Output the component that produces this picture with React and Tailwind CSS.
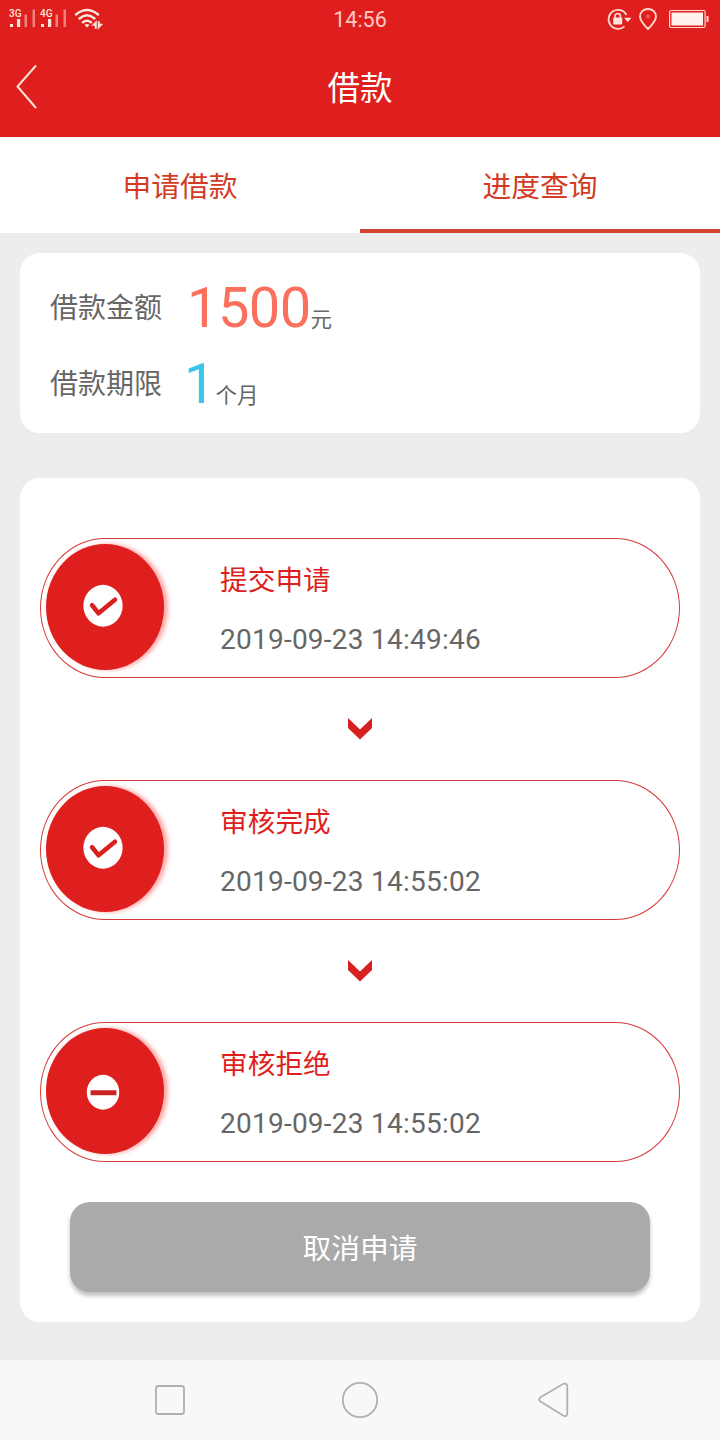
import React from "react";

const steps = [
  { title: "提交申请", time: "2019-09-23 14:49:46", icon: "check" },
  { title: "审核完成", time: "2019-09-23 14:55:02", icon: "check" },
  { title: "审核拒绝", time: "2019-09-23 14:55:02", icon: "minus" },
];

function Signal({ label }) {
  return (
    <svg className="h-6 w-[31px]" viewBox="0 0 31 24" fill="#ffe6dc">
      <text x="1" y="9.5" fontSize="10" fontWeight="500" fontFamily="Roboto, sans-serif">{label}</text>
      <rect x="2" y="17" width="3" height="3" />
      <rect x="9" y="12" width="3.200" height="8" />
      <rect x="16.500" y="7.500" width="2.500" height="12.500" opacity="0.5" />
      <rect x="24.500" y="2.500" width="2.500" height="17.500" opacity="0.5" />
    </svg>
  );
}

function StatusBar() {
  return (
    <div className="grid h-10 grid-cols-3 items-center">
      <div className="flex items-center pb-[2px] pl-2">
        <Signal label="3G" />
        <Signal label="4G" />
        <svg className="ml-1 h-6 w-[30px]" viewBox="0 0 30 24" fill="none" stroke="#ffe6dc" strokeWidth="2.400" strokeLinecap="round">
          <path d="M2 7.500Q13-1.500 24 7.500M5.500 11.500Q13 5 20.500 11.500M9 15.300Q13 12 17 15.300" />
          <path d="M10.500 18Q13 16 15.500 18L13 20.500Z" fill="#ffe6dc" stroke="none" />
          <path d="M22.500 14V21.500H21V18.500H18ZM24 22V14.500H25.500V17H28.500Z" fill="#ffe6dc" stroke="#ffe6dc" strokeWidth="0.500" />
        </svg>
      </div>
      <div className="text-center text-[21.500px] leading-[40px] text-[#ffc8c0]">14:56</div>
      <div className="flex items-center justify-end pb-[3px] pr-[11px]">
        <svg className="h-6 w-[26px]" viewBox="0 0 26 24" fill="none" stroke="#ffd9cf" strokeWidth="1.700">
          <path d="M20.500 8A9.500 9.500 0 1 0 18.500 19.300" />
          <path d="M18 10.700H25.500L21.800 15Z" fill="#ffe6dc" stroke="none" />
          <rect x="7.200" y="10.500" width="9" height="7" rx="1" fill="#ffe6dc" stroke="none" />
          <path d="M9 11V9Q9 6.700 11.700 6.700T14.400 9V11" />
        </svg>
        <svg className="ml-[6px] h-6 w-5" viewBox="0 0 20 24" fill="none" stroke="#ffd9cf" strokeWidth="1.900">
          <path d="M10 2C5.300 2 2 5.300 2 9.500C2 14 6 18 10 22C14 18 18 14 18 9.500C18 5.300 14.700 2 10 2Z" />
          <circle cx="10" cy="9.500" r="2" fill="#f56055" stroke="none" />
        </svg>
        <svg className="ml-[10px] h-6 w-[41px]" viewBox="0 0 41 24" fill="none">
          <rect x="1.600" y="3.500" width="35.500" height="17" rx="1.500" stroke="#ffd9cf" strokeWidth="1.200" />
          <rect x="3.500" y="5.500" width="31.500" height="13" fill="#fff1ee" />
          <rect x="38.500" y="9" width="2" height="6" rx="0.500" fill="#ffd9cf" />
        </svg>
      </div>
    </div>
  );
}

function Step({ title, time, icon }) {
  return (
    <div className="flex h-[140px] rounded-[65px/70px] border border-[#d93a3c] pl-[4.500px] pt-[5px]">
      <div className="h-[125.500px] w-[118px] rounded-[50%] bg-[#de1f1e] shadow-[4px_0_4px_rgba(255,60,60,0.45)]">
        {icon === "check" ? (
          <svg className="h-full w-full" viewBox="0 0 118 126">
            <ellipse cx="57" cy="62" rx="19.700" ry="21" fill="#fff" />
            <path d="M46 61.500L52.500 69.500L69 56" fill="none" stroke="#d8201f" strokeWidth="4.600" strokeLinecap="round" strokeLinejoin="round" />
          </svg>
        ) : (
          <svg className="h-full w-full" viewBox="0 0 118 126">
            <ellipse cx="57" cy="64.500" rx="16.300" ry="17.500" fill="#fff" />
            <rect x="44.500" y="62.500" width="26" height="5" fill="#cc2424" />
          </svg>
        )}
      </div>
      <div className="ml-[56.500px] pt-[17px]">
        <div className="h-10 text-[27.700px] leading-[40px] text-[#de1f1e]">{title}</div>
        <div className="mt-[19px] h-10 text-[28px] leading-[40px] tracking-[0.240px] text-[#666]">{time}</div>
      </div>
    </div>
  );
}

export default function App() {
  return (
    <div className="flex h-[1440px] w-[720px] flex-col bg-[#ededed] font-['Roboto','Noto_Sans_CJK_SC',sans-serif]">
      <header className="h-[137px] bg-[#de1f1e]">
        <StatusBar />
        <div className="grid h-[93px] grid-cols-3 items-center">
          <svg className="ml-[14px] h-12 w-6" viewBox="0 0 24 48" fill="none" stroke="#ffe4da" strokeWidth="2">
            <path d="M22 2.500L3.500 23.500L22 45" />
          </svg>
          <h1 className="pt-1 text-center text-[32.500px] leading-[48px] text-white">借款</h1>
        </div>
      </header>

      <nav className="grid h-24 grid-cols-2 bg-white text-center text-[28.800px] leading-[100px] text-[#d23c24]">
        <div className="h-24">申请借款</div>
        <div className="h-24 border-b-4 border-[#cf4430]">进度查询</div>
      </nav>

      <main className="flex flex-1 flex-col px-5 pt-5">
        <section className="flex h-[180px] flex-col rounded-[20px] bg-white pl-[30px] pt-[17px] text-[#666]">
          <div className="flex h-[76px] items-center">
            <span className="pt-[2px] text-[28px] leading-[76px]">借款金额</span>
            <span className="ml-[25px] flex items-baseline">
              <span className="text-[56px] leading-[76px] tracking-[-0.600px] text-[#fb705c]">1500</span>
              <span className="text-[21.500px] leading-[30px]">元</span>
            </span>
          </div>
          <div className="flex h-[76px] items-center">
            <span className="pt-[2px] text-[28px] leading-[76px]">借款期限</span>
            <span className="ml-[22px] flex items-baseline">
              <span className="text-[56px] leading-[76px] text-[#3cc5ec]">1</span>
              <span className="text-[21.500px] leading-[30px]">个月</span>
            </span>
          </div>
        </section>

        <section className="mt-[45px] h-[844px] rounded-[20px] bg-white px-5 pt-[60px]">
          {steps.map((step, i) => (
            <React.Fragment key={step.title}>
              {i > 0 && (
                <div className="flex h-[102px] items-center justify-center">
                  <svg className="h-[22px] w-6" viewBox="0 0 24 22">
                    <path d="M0 0L12 11.500L24 0V10L12 21.500L0 10Z" fill="#d92020" />
                  </svg>
                </div>
              )}
              <Step {...step} />
            </React.Fragment>
          ))}
          <button className="mx-[30px] mt-10 block h-[90px] w-[580px] rounded-[20px] bg-[#aaa] pt-[5px] text-[28.800px] text-white shadow-[0_4px_4px_rgba(0,0,0,0.25)]">
            取消申请
          </button>
        </section>
      </main>

      <footer className="flex h-20 items-center bg-[#f8f8f8]">
        <svg className="ml-[154px] h-8 w-8" viewBox="0 0 32 32" fill="none" stroke="#b0b0b0" strokeWidth="1.800">
          <rect x="2" y="2" width="28" height="28" rx="2.500" />
        </svg>
        <svg className="ml-[155px] h-[38px] w-[38px]" viewBox="0 0 38 38" fill="none" stroke="#b0b0b0" strokeWidth="1.800">
          <circle cx="19" cy="19" r="17.200" />
        </svg>
        <svg className="ml-[158px] h-9 w-8" viewBox="0 0 32 36" fill="none" stroke="#b0b0b0" strokeWidth="1.800" strokeLinejoin="round">
          <path d="M26 2L3.500 15.200Q0.800 17.500 3.500 19.500L26 33.500Q30.300 35.500 30.300 31V4.500Q30 0.500 26 2Z" />
        </svg>
      </footer>
    </div>
  );
}
